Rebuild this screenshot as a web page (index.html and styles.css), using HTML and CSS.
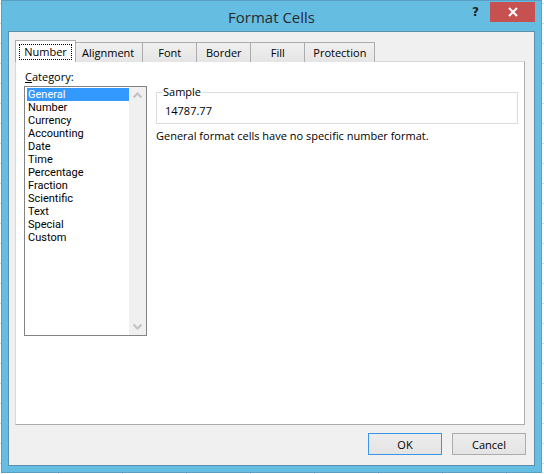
FILE: index.html
```html
<!DOCTYPE html>
<html>
<head>
<meta charset="utf-8">
<link rel="stylesheet" href="styles.css">
</head>
<body>
<div class="window">
  <div class="titlebar">
    <div class="spacer"></div>
    <div class="title">Format Cells</div>
    <div class="controls">
      <span class="help">?</span>
      <span class="close"><svg width="10" height="10" viewBox="0 0 10 10"><path d="M1 1L9 9M9 1L1 9" stroke="#fff" stroke-width="2" fill="none"/></svg></span>
    </div>
  </div>
  <div class="client">
    <div class="tabs">
      <div class="tab selected"><span class="focus">Number</span></div>
      <div class="tab">Alignment</div>
      <div class="tab">Font</div>
      <div class="tab">Border</div>
      <div class="tab">Fill</div>
      <div class="tab">Protection</div>
    </div>
    <div class="panel">
      <div class="category">
        <div class="label"><u>C</u>ategory:</div>
        <div class="listbox">
          <ul class="items">
            <li class="active">General</li>
            <li>Number</li>
            <li>Currency</li>
            <li>Accounting</li>
            <li>Date</li>
            <li>Time</li>
            <li>Percentage</li>
            <li>Fraction</li>
            <li>Scientific</li>
            <li>Text</li>
            <li>Special</li>
            <li>Custom</li>
          </ul>
          <div class="scrollbar">
            <svg width="17" height="17" viewBox="0 0 17 17"><path d="M4.5 10.5L8.5 6.5L12.5 10.5" stroke="#c2c2c2" stroke-width="2" fill="none"/></svg>
            <svg width="17" height="17" viewBox="0 0 17 17"><path d="M4.5 6.5L8.5 10.5L12.5 6.5" stroke="#c2c2c2" stroke-width="2" fill="none"/></svg>
          </div>
        </div>
      </div>
      <div class="details">
        <fieldset class="sample">
          <legend>Sample</legend>
          <div class="sample-value">14787.77</div>
        </fieldset>
        <p class="desc">General format cells have no specific number format.</p>
      </div>
    </div>
    <div class="buttons">
      <button class="btn default">OK</button>
      <button class="btn">Cancel</button>
    </div>
  </div>
</div>
</body>
</html>
```

FILE: styles.css
```css
* { box-sizing: border-box; }
html, body { margin: 0; padding: 0; }
body {
  width: 544px;
  height: 474px;
  overflow: hidden;
  background-color: #ffffff;
  background-image:
    linear-gradient(to right, #d4d4d4 1px, transparent 1px),
    linear-gradient(to bottom, #d4d4d4 1px, transparent 1px);
  background-size: 64px 20px;
  background-position: 58px 3px;
  font-family: "Open Sans", "Noto Sans", sans-serif;
  font-size: 11px;
  color: #000;
}
.window {
  margin-left: 1px;
  width: 541px;
  height: 473px;
  background: #65bde2;
  border: 1px solid #5a9ec2;
  display: flex;
  flex-direction: column;
}
.titlebar {
  height: 30px;
  display: grid;
  grid-template-columns: 1fr auto 1fr;
  align-items: start;
}
.title {
  font-size: 15px;
  color: #2b2b2b;
  line-height: 30px;
  padding-top: 1px;
}
.controls {
  display: flex;
  justify-content: flex-end;
  align-items: center;
  padding-top: 1px;
  padding-right: 6px;
}
.help {
  font-family: "DejaVu Sans", sans-serif;
  font-weight: bold;
  font-size: 12px;
  color: #222;
  margin-right: 11px;
  line-height: 20px;
}
.close {
  width: 45px;
  height: 20px;
  background: #c75050;
  display: flex;
  align-items: center;
  justify-content: center;
}
.close svg { display: block; }
.client {
  margin: 0 6px 6px 6px;
  flex: 1;
  background: #f0f0f0;
  border: 1px solid #5b8fab;
  padding: 9px 8px 8px 6px;
  display: flex;
  flex-direction: column;
}
.tabs {
  display: flex;
  height: 21px;
  align-items: flex-end;
  padding-left: 2px;
  position: relative;
  z-index: 1;
}
.tab {
  height: 20px;
  min-width: 55px;
  padding: 0 8px;
  border: 1px solid #acacac;
  border-bottom: none;
  margin-left: -1px;
  background: linear-gradient(#f0f0f0, #e5e5e5);
  display: flex;
  align-items: center;
  justify-content: center;
  white-space: nowrap;
  line-height: 14px;
}
.tab.selected {
  height: 22px;
  width: 61px;
  margin-left: -2px;
  margin-right: -2px;
  background: #fff;
  position: relative;
  z-index: 2;
  padding: 0 3px;
}
.focus {
  border: 1px dotted #000;
  padding: 0 4px;
  line-height: 14px;
}
.panel {
  height: 364px;
  background: #fff;
  border: 1px solid #d9d9d9;
  border-color: #d9d9d9 #acacac #acacac #d9d9d9;
  margin-top: -1px;
  margin-right: 1px;
  display: flex;
  padding: 7px 6px 0 8px;
}
.category { width: 123px; }
.label { line-height: 15px; margin-left: 1px; }
.listbox {
  margin-top: 2px;
  height: 250px;
  border: 1px solid #838383;
  display: flex;
  width: 123px;
}
.items {
  list-style: none;
  margin: 0;
  padding: 1px 0 0 2px;
  flex: 1;
  font-family: Roboto, "Open Sans", sans-serif;
  font-size: 11px;
}
.items li {
  height: 13px;
  line-height: 13px;
  padding-left: 1px;
}
.items li.active {
  background: #3399ff;
  color: #fff;
}
.scrollbar {
  width: 17px;
  background: #f0f0f0;
  display: flex;
  flex-direction: column;
  justify-content: space-between;
}
.scrollbar svg { display: block; }
.details {
  flex: 1;
  padding-left: 9px;
  padding-right: 0;
}
.sample {
  margin: 16px 0 0 0;
  padding: 0 0 0 8px;
  border: 1px solid #dcdcdc;
  height: 39px;
  min-width: 0;
}
.sample legend {
  padding: 0 1px;
  margin-left: -3px;
  line-height: 14px;
}
.sample-value {
  line-height: 14px;
  margin-top: 5px;
}
.desc {
  margin: 5px 0 0 0;
  line-height: 14px;
}
.buttons {
  display: flex;
  justify-content: flex-end;
  gap: 10px;
  margin-top: 8px;
}
.btn {
  width: 74px;
  height: 22px;
  font-family: inherit;
  font-size: 11px;
  color: #000;
  background: linear-gradient(#ececec, #e4e4e4);
  border: 1px solid #acacac;
  padding: 0;
}
.btn.default {
  border-color: #3c94e6;
}
```
